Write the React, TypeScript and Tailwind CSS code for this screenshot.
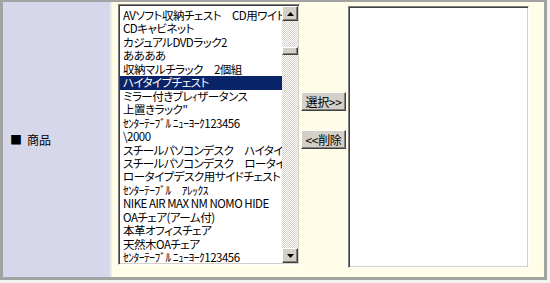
import React from 'react';

const items = [
  'AVソフト収納チェスト　CD用ワイド',
  'CDキャビネット',
  'カジュアルDVDラック2',
  'ああああ',
  '収納マルチラック　2個組',
  'ハイタイプチェスト',
  'ミラー付きブレｨザータンス',
  '上置きラック"',
  'ｾﾝﾀｰﾃｰﾌﾞﾙ ﾆｭｰﾖｰｸ123456',
  '\\2000',
  'スチールパソコンデスク　ハイタイプ',
  'スチールパソコンデスク　ロータイプ',
  'ロータイプデスク用サイドチェスト',
  'ｾﾝﾀｰﾃｰﾌﾞﾙ　ｱﾚｯｸｽ',
  'NIKE AIR MAX NM NOMO HIDE',
  'OAチェア(アーム付)',
  '本革オフィスチェア',
  '天然木OAチェア',
  'ｾﾝﾀｰﾃｰﾌﾞﾙ ﾆｭｰﾖｰｸ123456',
];

const font = { fontFamily: '"MS PGothic", "Noto Sans CJK JP", sans-serif' };

const ArrowBtn = ({ up }: { up?: boolean }) => (
  <div className="w-[16px] h-[15px] bg-[#d4d0c8] border border-t-white border-l-white border-r-[#404040] border-b-[#404040] shadow-[inset_-1px_-1px_0_#808080] flex items-center justify-center">
    <svg width="7" height="4" viewBox="0 0 7 4">
      {up ? <path d="M3.5 0 L7 4 L0 4 Z" fill="#000" /> : <path d="M0 0 L7 0 L3.5 4 Z" fill="#000" />}
    </svg>
  </div>
);

const Button = ({ label }: { label: string }) => (
  <button
    className="w-[45px] h-[19px] bg-[#d4d0c8] border border-t-white border-l-white border-r-[#404040] border-b-[#404040] shadow-[inset_-1px_-1px_0_#808080] text-[12px] leading-none tracking-[-0.3px] text-black flex items-center justify-center"
    style={font}
  >
    {label}
  </button>
);

export default function App() {
  return (
    <div className="w-[550px] h-[283px] bg-[#f2f2f2] [font-feature-settings:'palt']" style={font}>
      <div className="flex w-[547px] h-[280px] border-t-2 border-l-[3px] border-r-[3px] border-b-[3px] border-[#a3a3a3]">
        {/* label cell */}
        <div className="w-[109px] bg-[#d6d7eb] flex items-center pl-[7px] text-[12px] text-black border-r-2 border-[#ececec]">
          <span className="mr-[5px]">■</span>
          <span>商品</span>
        </div>

        {/* content cell */}
        <div className="flex-1 bg-[#fffde8] flex items-start pl-[6px] pt-[2px]">
          {/* product list */}
          <div className="w-[182px] h-[261px] flex border border-t-[#808080] border-l-[#808080] border-r-white border-b-white shadow-[inset_1px_1px_0_#404040,inset_-1px_-1px_0_#d4d0c8] bg-white p-[1px]">
            <div className="flex-1 overflow-hidden pt-[3px] text-[11.5px] tracking-[-0.5px] text-black">
              {items.map((t, i) => (
                <div
                  key={i}
                  className={`h-[13.46px] leading-[13.46px] pl-[3px] whitespace-nowrap overflow-hidden ${i === 5 ? 'bg-[#0a246a] text-white' : ''}`}
                >
                  {t}
                </div>
              ))}
            </div>
            <div className="w-[16px] flex flex-col bg-[repeating-conic-gradient(#d4d0c8_0%_25%,#ffffff_0%_50%)] bg-[length:2px_2px]">
              <ArrowBtn up />
              <div className="mt-[26px] w-[16px] h-[8px] bg-[#d4d0c8] border border-t-white border-l-white border-r-[#404040] border-b-[#404040] shadow-[inset_-1px_-1px_0_#808080]" />
              <div className="flex-1" />
              <ArrowBtn />
            </div>
          </div>

          {/* buttons */}
          <div className="flex flex-col gap-[19px] mt-[88px] ml-[1px]">
            <Button label="選択>>" />
            <Button label="<<削除" />
          </div>

          {/* selected list */}
          <div className="ml-[2px] mt-[2px] w-[181px] h-[262px] border border-t-[#808080] border-l-[#808080] border-r-white border-b-white shadow-[inset_1px_1px_0_#404040,inset_-1px_-1px_0_#d4d0c8] bg-white" />
        </div>
      </div>
    </div>
  );
}
